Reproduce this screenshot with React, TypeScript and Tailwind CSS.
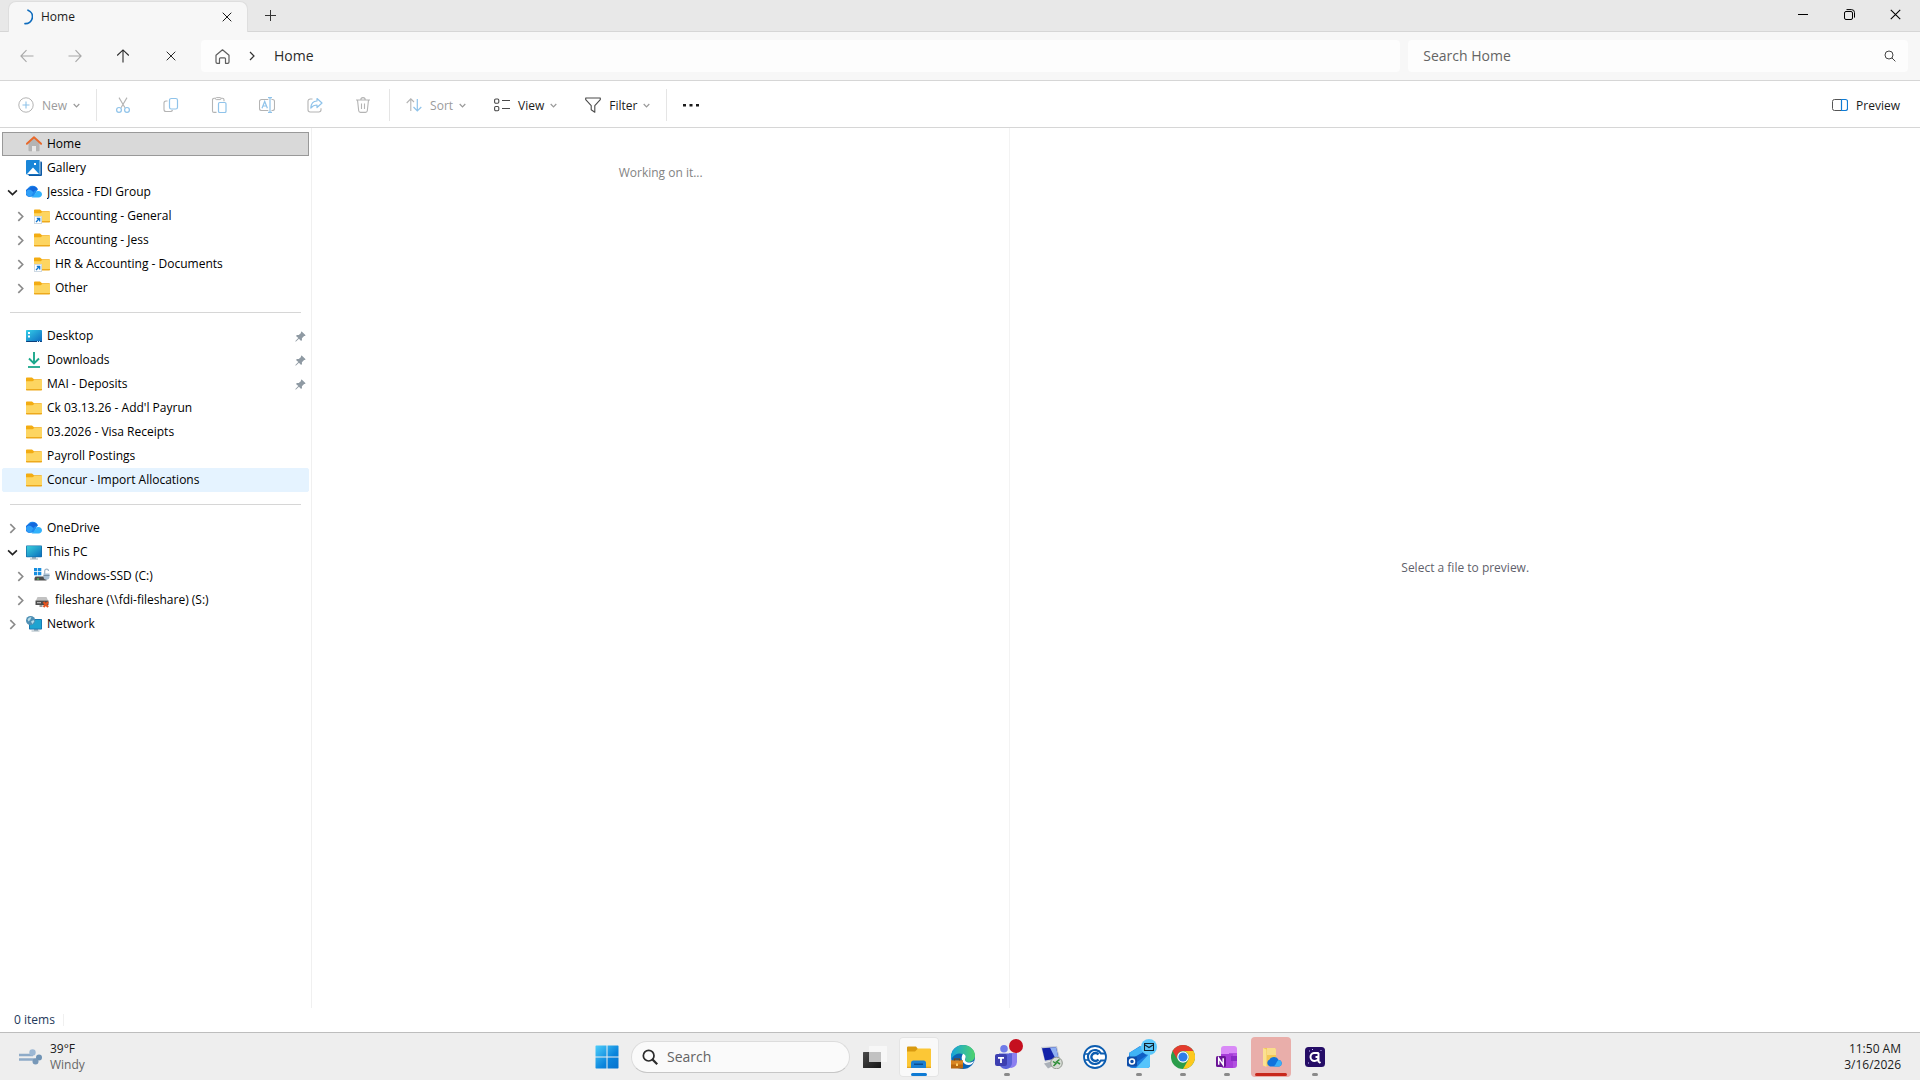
import type { ReactNode } from 'react';

function Svg({ size = 16, box = 16, children, className = '' }: { size?: number; box?: number; children: ReactNode; className?: string }) {
  return (
    <svg width={size} height={size} viewBox={`0 0 ${box} ${box}`} fill="none" stroke="none" className={`shrink-0 ${className}`} aria-hidden="true">
      {children}
    </svg>
  );
}

/* ---------- line icons ---------- */

const Cross = ({ size = 10 }: { size?: number }) => (
  <Svg size={size} box={10}>
    <path d="M.7.7l8.6 8.6M9.3.7L.7 9.3" stroke="currentColor" />
  </Svg>
);

const Arrow = ({ turn }: { turn: string }) => (
  <Svg size={14} box={14} className={turn}>
    <path d="M13.5 7H1M6.5 1.2L.9 7l5.6 5.8" stroke="currentColor" strokeWidth="1.1" />
  </Svg>
);

const ChevronDown = () => (
  <Svg size={7} box={7} className="text-[#9a9a9a]">
    <path d="M.7 2L3.5 4.9 6.3 2" stroke="currentColor" strokeWidth="1.2" />
  </Svg>
);

const NewIcon = () => (
  <Svg>
    <circle cx="8" cy="8" r="7.2" stroke="#b4b4b4" />
    <path d="M8 4.5v7M4.5 8h7" stroke="#8fc3ea" strokeWidth="1.1" />
  </Svg>
);

const CutIcon = () => (
  <Svg>
    <path d="M4 .6l6 10.2M12 .6L6 10.8" stroke="#b4b4b4" strokeWidth="1.1" />
    <circle cx="4" cy="12.9" r="2.4" stroke="#8fc3ea" strokeWidth="1.2" />
    <circle cx="12" cy="12.9" r="2.4" stroke="#8fc3ea" strokeWidth="1.2" />
  </Svg>
);

const CopyIcon = () => (
  <Svg>
    <path d="M4.5 4H3a2 2 0 0 0-2 2v6.5a2 2 0 0 0 2 2h4.500a2 2 0 0 0 2-1.500" stroke="#b4b4b4" strokeWidth="1.1" />
    <rect x="6.5" y="1.500" width="8" height="10.500" rx="1.800" stroke="#8fc3ea" strokeWidth="1.200" />
  </Svg>
);

const PasteIcon = () => (
  <Svg>
    <path d="M5.500 15.400H3a1.500 1.500 0 0 1-1.500-1.500V2.800A1.500 1.500 0 0 1 3 1.300h1.500M10 1.300h1.500A1.500 1.500 0 0 1 13 2.800v1.500" stroke="#b4b4b4" strokeWidth="1.100" />
    <rect x="4.500" y=".6" width="5.500" height="2" rx="1" stroke="#b4b4b4" />
    <rect x="7.500" y="5.500" width="7.500" height="10" rx="1.300" stroke="#8fc3ea" strokeWidth="1.200" />
  </Svg>
);

const RenameIcon = () => (
  <Svg>
    <path d="M9.300 2.500H2.500a2 2 0 0 0-2 2v7a2 2 0 0 0 2 2h6.800M12.500 2.500h1a2 2 0 0 1 2 2v7a2 2 0 0 1-2 2h-1" stroke="#b4b4b4" strokeWidth="1.100" />
    <path d="M11 .6v14.800M9 .6h4M9 15.400h4M3 11.300l2.700-6.800 2.700 6.800M3.900 9h3.600" stroke="#8fc3ea" strokeWidth="1.200" />
  </Svg>
);

const ShareIcon = () => (
  <Svg>
    <path d="M5.500 2H3.200A2.200 2.200 0 0 0 1 4.200v8.600A2.200 2.200 0 0 0 3.200 15h8.600a2.200 2.200 0 0 0 2.200-2.200v-1.500" stroke="#b4b4b4" strokeWidth="1.100" />
    <path d="M10 1.500l5 4.500-5 4.500V8C7.300 8 5.500 8.900 3.800 11 4 7 6 4.200 10 4V1.500z" stroke="#8fc3ea" strokeWidth="1.200" strokeLinejoin="round" />
  </Svg>
);

const TrashIcon = () => (
  <Svg>
    <path d="M1 3h14M5.800 2.800a2.200 2.200 0 0 1 4.400 0M2.500 3l1.200 10.800a1.800 1.800 0 0 0 1.800 1.600h5a1.800 1.800 0 0 0 1.800-1.600L13.500 3M6.500 6.500v5.500M9.500 6.500v5.500" stroke="#b4b4b4" strokeWidth="1.100" />
  </Svg>
);

const SortIcon = () => (
  <Svg>
    <path d="M4.800 14V2M.7 6l4.100-4.200L8 5" stroke="#b4b4b4" strokeWidth="1.100" />
    <path d="M11.300 2v12M7.500 10l3.800 4 4-4" stroke="#8fc3ea" strokeWidth="1.200" />
  </Svg>
);

const ViewIcon = () => (
  <Svg>
    <g stroke="#4a4a4a" strokeWidth="1.100">
      <rect x=".6" y="2" width="4.200" height="4.200" rx="1.200" />
      <rect x=".6" y="9.500" width="4.200" height="4.200" rx="1.200" />
      <path d="M8 3.500h8M8 11.500h8" />
    </g>
  </Svg>
);

const FilterIcon = () => (
  <Svg>
    <path d="M.7 1h14.600v1.700L9.800 8.700v6.500l-3.600-2.400V8.700L.7 2.700z" stroke="#4a4a4a" strokeWidth="1.100" strokeLinejoin="round" />
  </Svg>
);

const SearchIcon = ({ size = 12, bold = false }: { size?: number; bold?: boolean }) => (
  <Svg size={size} box={12}>
    <circle cx="5" cy="5" r="4" stroke="currentColor" strokeWidth={bold ? 1.3 : 1} />
    <path d="M7.900 7.900l3.500 3.500" stroke="currentColor" strokeWidth={bold ? 1.700 : 1} />
  </Svg>
);

/* ---------- tree icons ---------- */

const HomeIcon = () => (
  <Svg>
    <path d="M2.500 7L8 2l5.500 5v7.500a.8.800 0 0 1-.8.800H10V10H6v5.300H3.300a.8.800 0 0 1-.8-.8z" fill="#b4b4b4" />
    <path d="M6 10h4v5.300H6z" fill="#e8e8e8" />
    <path d="M.9 7.800L8 1.300l7.100 6.500" stroke="#e8682a" strokeWidth="1.900" strokeLinejoin="round" strokeLinecap="round" />
  </Svg>
);

const GalleryIcon = () => (
  <Svg>
    <path d="M13 1.500h2a1 1 0 0 1 1 1V15a1 1 0 0 1-1 1H3l-1-2z" fill="#0c59a4" />
    <rect width="14" height="14.500" rx="1" fill="#1a86d8" />
    <path d="M14 .5v14" stroke="#fff" strokeWidth=".7" />
    <path d="M1 14l6-6.500 6 6.500z" fill="#fff" />
    <rect x="8" y="3" width="2" height="2" fill="#fff" />
  </Svg>
);

const CloudIcon = () => (
  <Svg>
    <path d="M4 12.800A4 4 0 0 1 1.200 5.900 5.600 5.600 0 0 1 11.800 5.300l-4 7.500z" fill="#1f8df0" />
    <path d="M3.500 4.200A5 5 0 0 1 11.900 5.400c-3 .2-4.500 2-5.700 4C5.300 11 4.500 12 3.500 12.700A4 4 0 0 1 3.500 4.200z" fill="#1268dd" />
    <path d="M1 6.200C3 4.600 6.500 6.500 7.200 8.400L4.800 12.800H4A4 4 0 0 1 1 6.200z" fill="#2f9ff7" />
    <path d="M5.500 13.500c2.500-1 3.200-4.500 6-6.500 2.700-.4 4.500 1.300 4.500 3.300s-1.500 3.200-3.500 3.200z" fill="#32b2fb" />
  </Svg>
);

const FolderIcon = ({ linked = false }: { linked?: boolean }) => (
  <Svg>
    <path d="M0 2.300a.8.800 0 0 1 .8-.8H6l2 1.700h7.200a.8.800 0 0 1 .8.800V8H0z" fill="#f3ac12" />
    <path d="M0 5.200h6.500L8.300 4H16v9.200a.8.800 0 0 1-.8.800H.8a.8.800 0 0 1-.8-.8z" fill="#fdd561" />
    <path d="M0 13v.4c0 .6.4 1 1 1h14c.6 0 1-.4 1-1V13z" fill="#eda91c" />
    {linked && (
      <>
        <rect x=".5" y="8.500" width="7" height="7" fill="#fff" stroke="#cdd8e2" />
        <path d="M2 14l3.500-3.500M2.800 10.500h2.900v2.900" stroke="#0f75cf" strokeWidth="1.300" />
      </>
    )}
  </Svg>
);

const DesktopIcon = () => (
  <Svg>
    <defs>
      <linearGradient id="desk" x1="0" y1="0" x2="1" y2="1">
        <stop stopColor="#35cfe8" />
        <stop offset="1" stopColor="#0c68c0" />
      </linearGradient>
    </defs>
    <rect y="2" width="16" height="12" rx=".8" fill="url(#desk)" />
    <path d="M0 13h16v.3a.8.800 0 0 1-.8.800H.8a.8.800 0 0 1-.8-.8z" fill="#0b3f7c" />
    <path d="M2 4h2v2H2zM2 7.500h2v2H2z" fill="#fff" />
    <path d="M11 13h1v1h-1zM13 13h1v1h-1z" fill="#bfe6ff" />
  </Svg>
);

const DownloadIcon = () => (
  <Svg>
    <path d="M8 0v11M3 6.500L8 11.400l5-4.900" stroke="#1ba88c" strokeWidth="1.900" />
    <path d="M2 15h12" stroke="#1ba88c" strokeWidth="1.800" />
  </Svg>
);

const PcIcon = () => (
  <Svg>
    <defs>
      <linearGradient id="pc" x1="0" y1="0" x2="1" y2="1">
        <stop stopColor="#3bd0dc" />
        <stop offset="1" stopColor="#0a6fbd" />
      </linearGradient>
    </defs>
    <path d="M6 13h4v2H6z" fill="#9db1be" />
    <rect y="1.500" width="16" height="11.800" rx=".8" fill="#146aa8" />
    <rect x=".7" y="2.100" width="14.600" height="10.500" fill="url(#pc)" />
    <path d="M4 14.500h8v1H4z" fill="#a3b3bd" />
  </Svg>
);

const DriveIcon = () => (
  <Svg>
    <path d="M0 0h3.300v3.300H0zM4 0h3.300v3.300H4zM0 4h3.300v3.300H0zM4 4h3.300v3.300H4z" fill="#168ee0" />
    <path d="M1.500 8.500h10l1 1.500v2.500H.5V10z" fill="#4d4d4d" />
    <path d="M3 10.500h2v1H3z" fill="#58e05c" />
    <path d="M10.700 6V3a1.900 1.900 0 0 1 3.800 0" stroke="#9fb4c6" strokeWidth="1.200" />
    <path d="M9.500 5.500h6v3.300a3 3 0 0 1-6 0z" fill="#a9c0d4" />
    <path d="M9.500 7.500h6" stroke="#7891a6" />
  </Svg>
);

const ShareDriveIcon = () => (
  <Svg>
    <path d="M3.500 5h9l1.500 3.500H2z" fill="#c2c2c2" />
    <path d="M1.500 8.500h13V13h-13z" fill="#4c4c4c" />
    <path d="M3 10h4v1.300H3z" fill="#b5b5b5" />
    <path d="M5.500 13h3v2h-3z" fill="#9b9b9b" />
    <path d="M9.500 10l4.600 5M14.100 10l-4.600 5" stroke="#e2531f" strokeWidth="2.100" />
  </Svg>
);

const NetworkIcon = () => (
  <Svg>
    <path d="M8 13h4v2H8z" fill="#9db1be" />
    <rect x="3" y="3" width="13" height="10.500" rx=".8" fill="#146aa8" />
    <rect x="3.700" y="3.700" width="11.600" height="9" fill="#1fa3d0" />
    <path d="M5.500 14.500h8v1h-8z" fill="#a3b3bd" />
    <circle cx="4.600" cy="4.600" r="4.600" fill="#4e8fb4" />
    <path d="M1.500 3.500c1-2 3-2.500 4-2.200L4.300 3.800 2.500 5.500zM5 5.500l2.500-1.500.8 1.500-2 2.500z" fill="#b6dbe8" />
  </Svg>
);

const PinIcon = () => (
  <Svg size={11} box={11}>
    <path d="M6.700.4l3.900 3.900-.7.800-.8-.1-2.200 2.200.1 1.900-.9.900-2.200-2.300L1 10.600H.4V10l2.900-2.900L1 4.900 1.900 4l1.900.1L6 1.900l-.1-.8z" fill="#8f9aa3" />
  </Svg>
);

/* ---------- navigation tree ---------- */

type Row = { label: string; icon: ReactNode; depth?: number; arrow?: 'open' | 'closed'; pinned?: boolean; state?: 'selected' | 'hover' };

const groups: Row[][] = [
  [
    { label: 'Home', icon: <HomeIcon />, state: 'selected' },
    { label: 'Gallery', icon: <GalleryIcon /> },
    { label: 'Jessica - FDI Group', icon: <CloudIcon />, arrow: 'open' },
    { label: 'Accounting - General', icon: <FolderIcon linked />, depth: 1, arrow: 'closed' },
    { label: 'Accounting - Jess', icon: <FolderIcon />, depth: 1, arrow: 'closed' },
    { label: 'HR & Accounting - Documents', icon: <FolderIcon linked />, depth: 1, arrow: 'closed' },
    { label: 'Other', icon: <FolderIcon />, depth: 1, arrow: 'closed' },
  ],
  [
    { label: 'Desktop', icon: <DesktopIcon />, pinned: true },
    { label: 'Downloads', icon: <DownloadIcon />, pinned: true },
    { label: 'MAI - Deposits', icon: <FolderIcon />, pinned: true },
    { label: "Ck 03.13.26 - Add'l Payrun", icon: <FolderIcon /> },
    { label: '03.2026 - Visa Receipts', icon: <FolderIcon /> },
    { label: 'Payroll Postings', icon: <FolderIcon /> },
    { label: 'Concur - Import Allocations', icon: <FolderIcon />, state: 'hover' },
  ],
  [
    { label: 'OneDrive', icon: <CloudIcon />, arrow: 'closed' },
    { label: 'This PC', icon: <PcIcon />, arrow: 'open' },
    { label: 'Windows-SSD (C:)', icon: <DriveIcon />, depth: 1, arrow: 'closed' },
    { label: 'fileshare (\\\\fdi-fileshare) (S:)', icon: <ShareDriveIcon />, depth: 1, arrow: 'closed' },
    { label: 'Network', icon: <NetworkIcon />, arrow: 'closed' },
  ],
];

const rowState = {
  selected: 'border-[#999999] bg-[#d9d9d9]',
  hover: 'rounded-xs border-[#e5f3ff] bg-[#e5f3ff]',
  none: 'border-transparent',
};

function TreeRow({ row }: { row: Row }) {
  return (
    <li>
      <button type="button" className={`flex h-6 w-full items-center border text-left text-xs text-black ${row.depth ? 'pl-3' : 'pl-1'} ${rowState[row.state ?? 'none']}`}>
        <span className="flex w-[19px] shrink-0">
          {row.arrow === 'open' && (
            <Svg size={11} box={10}>
              <path d="M1 3l4 4 4-4" stroke="#222" strokeWidth="1.500" />
            </Svg>
          )}
          {row.arrow === 'closed' && (
            <Svg size={11} box={10}>
              <path d="M3 1l4 4-4 4" stroke="#8a8a8a" strokeWidth="1.500" />
            </Svg>
          )}
        </span>
        {row.icon}
        <span className="ml-[5px] flex-1 truncate">{row.label}</span>
        {row.pinned && <span className="mr-0.5"><PinIcon /></span>}
      </button>
    </li>
  );
}

/* ---------- taskbar ---------- */

const WindowsLogo = () => (
  <Svg size={24} box={24}>
    <defs>
      <linearGradient id="win" gradientUnits="userSpaceOnUse" x1="0" y1="0" x2="24" y2="24">
        <stop stopColor="#4fd0fb" />
        <stop offset=".6" stopColor="#0a84dc" />
        <stop offset="1" stopColor="#0670cc" />
      </linearGradient>
    </defs>
    <path d="M1 .5h10.500v11H.5V1zM12.500.5H23l.5.5v10.500h-11zM.5 12.500h11v11H1l-.5-.5zM12.500 12.500h11V23l-.5.500H12.500z" fill="url(#win)" />
  </Svg>
);

const TaskViewIcon = () => (
  <Svg size={24} box={24}>
    <defs>
      <linearGradient id="tv" x1="0" y1="0" x2="1" y2="1">
        <stop stopColor="#4a4a4a" />
        <stop offset="1" stopColor="#161616" />
      </linearGradient>
    </defs>
    <rect y="7" width="18" height="16" rx=".5" fill="url(#tv)" />
    <rect x="6" y="1" width="18" height="16" rx=".5" fill="#f7f7f7" />
    <rect x="6" y="7" width="12" height="10" fill="#c2c2c2" />
  </Svg>
);

const ExplorerIcon = () => (
  <Svg size={24} box={24}>
    <path d="M0 2.500a1 1 0 0 1 1-1h8l2 2.500h12a1 1 0 0 1 1 1V9H0z" fill="#d99a10" />
    <path d="M0 6.500h8l3-3h12a1 1 0 0 1 1 1V23H0z" fill="#fcc736" />
    <path d="M0 21.700h24v1.300H0z" fill="#e5a51e" />
    <path d="M4 23v-5a2.500 2.500 0 0 1 2.500-2.500h10A2.500 2.500 0 0 1 19 18v5z" fill="#1c80d2" />
    <path d="M7 18.500h9v1.500H7z" fill="#0b4d91" />
  </Svg>
);

const EdgeIcon = () => (
  <Svg size={24} box={24}>
    <defs>
      <linearGradient id="edge" x1="0" y1="0" x2="1" y2="0">
        <stop stopColor="#16a3dd" />
        <stop offset="1" stopColor="#4fd36b" />
      </linearGradient>
    </defs>
    <circle cx="12" cy="12" r="12" fill="#0b64b5" />
    <path d="M0 11C1 4 6 0 12 0c7 0 12 5 12 10.500 0 4-3 6.500-6.500 6.500-3 0-4-1.200-3.300-2.500C16 11 12 8 8 8.500 4 9 1 12 .2 15z" fill="url(#edge)" />
    <path d="M12 8.800c2 .5 3.500 2.500 2.200 5-1 2 .8 3.700 4.300 3.700 1.800 0 3.500-.6 4.500-1.500-1 2.500-3 4-5.500 4-5 0-9-6-5.500-11.200z" fill="#fff" />
    <path d="M0 15.500h12v8H0z" fill="#b9670e" />
    <path d="M0 15.500h12v4H0z" fill="#d98521" />
    <path d="M3.500 15.500V14h5v1.500" stroke="#7d430a" strokeWidth="1.200" />
    <rect x="5" y="18.500" width="2" height="2.500" fill="#ffd26a" />
  </Svg>
);

const TeamsIcon = () => (
  <Svg size={24} box={24}>
    <circle cx="9" cy="3.800" r="3.800" fill="#6f7be8" />
    <path d="M14 8h8v9a6 6 0 0 1-8 5.500z" fill="#8b7ff0" />
    <path d="M4 8.500h13V18a6 6 0 0 1-6.500 6A6.500 6.500 0 0 1 4 17.500z" fill="#5a62d8" />
    <rect x="0" y="9" width="12" height="12" rx="2" fill="#3d3fb0" />
    <path d="M3 12h6v1.700H6.900V18H5.100v-4.300H3z" fill="#fff" />
  </Svg>
);

const RemoteIcon = () => (
  <Svg size={24} box={24}>
    <path d="M2 2l16-1 3 13L6 17z" fill="#c6cbd3" />
    <path d="M3 3.200l14-1 2.500 11L6 15.500z" fill="#1222a8" />
    <path d="M11 2.700l6-.5 2.500 11-3 .5z" fill="#8fb0f2" />
    <path d="M5 18.500l7-2 3 4-6 3z" fill="#aab0b8" />
    <circle cx="17.500" cy="18" r="5.800" fill="#d7dbd5" stroke="#92988f" />
    <path d="M14 16.500l3 2-2.500 2.500M20.500 14.500l-3 2.500 3.500 2" stroke="#2f8f38" strokeWidth="1.500" />
  </Svg>
);

const CIcon = () => (
  <Svg size={24} box={24}>
    <circle cx="12" cy="12" r="11" fill="#fff" stroke="#0c5db0" strokeWidth="1.800" />
    <path d="M1.500 9H6M1.500 15H6" stroke="#0c5db0" strokeWidth="1.600" />
    <path d="M22.500 8.500H18a7 7 0 1 0 0 7h4.500" stroke="#0c5db0" strokeWidth="2.200" />
    <path d="M15.500 9.500a4 4 0 1 0 0 5" stroke="#0c5db0" strokeWidth="2.400" />
  </Svg>
);

const OutlookIcon = () => (
  <Svg size={24} box={24}>
    <path d="M2 8L13 1l10 7v12a3 3 0 0 1-3 3H5a3 3 0 0 1-3-3z" fill="#1c7fe0" />
    <path d="M2 8L14 1l6 4L4 15z" fill="#3fb3f5" />
    <path d="M23 8v12a3 3 0 0 1-3 3H9z" fill="#56c4fb" />
    <path d="M4 14L20 5l3 3-13 9z" fill="#0f5fc4" />
    <rect x="0" y="11.500" width="10" height="10" rx="1.500" fill="#0e4da8" />
    <circle cx="5" cy="16.500" r="2.500" stroke="#fff" strokeWidth="1.500" />
  </Svg>
);

const ChromeIcon = () => (
  <Svg size={24} box={24}>
    <circle cx="12" cy="12" r="12" fill="#2a9d4a" />
    <path d="M1.600 6A12 12 0 0 1 22.400 6H12a6 6 0 0 0-5.200 9z" fill="#e33b2e" />
    <path d="M22.400 6A12 12 0 0 1 12 24l5.200-9A6 6 0 0 0 12 6z" fill="#fdc81e" />
    <circle cx="12" cy="12" r="5.800" fill="#fff" />
    <circle cx="12" cy="12" r="4.600" fill="#2f7de8" />
  </Svg>
);

const OneNoteIcon = () => (
  <Svg size={24} box={24}>
    <path d="M6 4a3 3 0 0 1 3-3h10a3 3 0 0 1 3 3v6H6z" fill="#d98af7" />
    <path d="M14 8h8v12a3 3 0 0 1-3 3h-5z" fill="#b14fe0" />
    <path d="M6 9h12v14H9a3 3 0 0 1-3-3z" fill="#a63bd8" />
    <path d="M16 11h6v5h-6z" fill="#8a2bc4" />
    <rect x="1" y="11" width="10" height="11" rx="1.500" fill="#6a1496" />
    <path d="M3.700 19.800v-6.600L8.200 19.800v-6.600" stroke="#fff" strokeWidth="1.500" />
  </Svg>
);

const OneDriveFolderIcon = () => (
  <Svg size={24} box={24}>
    <path d="M4 3h12l1 1.500V21H4z" fill="#f3c756" />
    <path d="M4 3l3.500 1.500V22L4 20.500z" fill="#fbe191" />
    <path d="M8 3h8l1 1.500V10H8z" fill="#f9dc8c" />
    <path d="M11 21.500a3.700 3.700 0 0 1-.4-7 5 5 0 0 1 9 .5 3.300 3.300 0 0 1 .6 6.500z" fill="#1173dc" />
    <path d="M14 21.500c3-.5 3-4.500 5.500-6.500a3.300 3.300 0 0 1 .6 6.500z" fill="#39b0f7" />
  </Svg>
);

const QIcon = () => (
  <Svg size={24} box={24}>
    <rect x="2" y="2" width="20" height="20" rx="3.500" fill="#250d66" />
    <path d="M15.800 8H11a4 4 0 1 0 4.500 4H12.500M15.500 8v8.500l2 1.500" stroke="#fff" strokeWidth="2" />
    <path d="M6 5.500h1v1H6zM9 4h1v1H9zM17.500 5h1v1h-1zM5 17.500h1v1H5z" fill="#c9b9ff" />
  </Svg>
);

type TaskApp = { name: string; icon: ReactNode; mark?: 'running' | 'active' | 'alert'; badge?: ReactNode };

const apps: TaskApp[] = [
  { name: 'Task View', icon: <TaskViewIcon /> },
  { name: 'File Explorer', icon: <ExplorerIcon />, mark: 'active' },
  { name: 'Microsoft Edge', icon: <EdgeIcon /> },
  { name: 'Microsoft Teams', icon: <TeamsIcon />, mark: 'running', badge: <span className="absolute top-1.5 right-1.5 size-3.5 rounded-full bg-[#c50f1f]" /> },
  { name: 'Remote Desktop', icon: <RemoteIcon /> },
  { name: 'Connect', icon: <CIcon /> },
  {
    name: 'Outlook',
    icon: <OutlookIcon />,
    mark: 'running',
    badge: (
      <span className="absolute top-1.5 right-1 flex size-4 items-center justify-center rounded-full bg-[#5cc8fa]">
        <Svg size={10} box={10}>
          <path d="M.5 1.500h9v7h-9zM1 3l4 2.500L9 3" stroke="#10222e" strokeWidth="1.100" />
        </Svg>
      </span>
    ),
  },
  { name: 'Google Chrome', icon: <ChromeIcon />, mark: 'running' },
  { name: 'OneNote', icon: <OneNoteIcon />, mark: 'running' },
  { name: 'OneDrive', icon: <OneDriveFolderIcon />, mark: 'alert' },
  { name: 'Quick Assist', icon: <QIcon />, mark: 'running' },
];

const frame = {
  none: '',
  running: '',
  active: 'bg-[#f9f9f9] ring-1 ring-[#e4e4e4] ring-inset',
  alert: 'bg-[#e9aeaa]',
};
const bar = {
  none: 'hidden',
  running: 'w-1.5 bg-[#8a8a8a]',
  active: 'w-4 bg-[#0f7bd4]',
  alert: 'w-8 bg-[#c8281c]',
};

function TaskButton({ app }: { app: TaskApp }) {
  const mark = app.mark ?? 'none';
  return (
    <button type="button" aria-label={app.name} className="relative flex h-full w-11 items-center justify-center">
      <span className={`flex size-10 items-center justify-center rounded ${frame[mark]}`}>{app.icon}</span>
      {app.badge}
      <span className={`absolute bottom-1 h-[3px] rounded-full ${bar[mark]}`} />
    </button>
  );
}

/* ---------- page ---------- */

const Divider = () => <span className="h-8 w-px bg-[#e5e5e5]" />;

function Menu({ icon, label, disabled = false }: { icon: ReactNode; label: string; disabled?: boolean }) {
  return (
    <button type="button" disabled={disabled} className={`flex h-8 items-center px-3.5 ${disabled ? 'text-[#9b9b9b]' : 'text-[#1b1b1b]'}`}>
      {icon}
      <span className="mr-1.5 ml-2 pt-0.5">{label}</span>
      <ChevronDown />
    </button>
  );
}

const edits = [
  { name: 'Cut', icon: <CutIcon /> },
  { name: 'Copy', icon: <CopyIcon /> },
  { name: 'Paste', icon: <PasteIcon /> },
  { name: 'Rename', icon: <RenameIcon /> },
  { name: 'Share', icon: <ShareIcon /> },
  { name: 'Delete', icon: <TrashIcon /> },
];

export default function App() {
  return (
    <div className="flex h-screen flex-col overflow-hidden bg-white font-['Open_Sans','Noto_Sans',sans-serif] text-xs text-[#1b1b1b]">
      <header className="flex h-8 shrink-0 items-stretch border-b border-[#d6d6d6] bg-[#e8e8e8]">
        <div className="mt-px -mb-px ml-2 flex w-60 items-center rounded-t-lg border border-b-0 border-[#dedede] bg-[#f7f7f7] pr-[11px] pl-2 text-[#1b1b1b]">
          <Svg>
            <path d="M11 1.200A7 7 0 0 1 8 14.700" stroke="#0f6cbd" strokeWidth="1.700" strokeLinecap="round" />
          </Svg>
          <span className="ml-2 flex-1 font-medium">Home</span>
          <button type="button" aria-label="Close tab" className="p-1"><Cross /></button>
        </div>
        <button type="button" aria-label="New tab" className="flex w-11 items-center justify-center">
          <Svg size={11} box={11}><path d="M5.500 0v11M0 5.500h11" stroke="#333" /></Svg>
        </button>
        <div className="ml-auto flex pr-0.5 pb-[3px] text-black">
          <button type="button" aria-label="Minimize" className="flex w-[46px] items-center justify-center">
            <Svg size={10} box={10}><path d="M0 5.500h10" stroke="currentColor" /></Svg>
          </button>
          <button type="button" aria-label="Restore" className="flex w-[46px] items-center justify-center">
            <Svg size={11} box={11}>
              <rect x=".5" y="2.500" width="8" height="8" rx="1.500" stroke="currentColor" />
              <path d="M2.500.6h5a3 3 0 0 1 3 3v5" stroke="currentColor" />
            </Svg>
          </button>
          <button type="button" aria-label="Close" className="flex w-[46px] items-center justify-center"><Cross size={11} /></button>
        </div>
      </header>

      <div className="flex h-[49px] shrink-0 items-center border-b border-[#d6d6d6] bg-[#f7f7f7] pr-3 pl-[3px] text-sm">
        <button type="button" aria-label="Back" disabled className="flex w-12 justify-center text-[#a8a8a8]"><Arrow turn="" /></button>
        <button type="button" aria-label="Forward" disabled className="flex w-12 justify-center text-[#a8a8a8]"><Arrow turn="rotate-180" /></button>
        <button type="button" aria-label="Up" className="flex w-12 justify-center text-[#2b2b2b]"><Arrow turn="rotate-90" /></button>
        <button type="button" aria-label="Stop loading" className="flex w-12 justify-center text-[#2b2b2b]"><Cross /></button>
        <div className="ml-1.5 grid flex-1 grid-cols-[12fr_5fr] gap-2">
          <nav aria-label="Address" className="flex h-8 items-center rounded bg-[#fdfdfd] pl-3.5">
            <button type="button" aria-label="Home location">
              <Svg size={15} box={15}>
                <path d="M1 6.300L7.500.800 14 6.300v6.700a1.300 1.300 0 0 1-1.300 1.300h-2.200V9.800A1 1 0 0 0 9.500 8.800h-4a1 1 0 0 0-1 1v4.500H2.300A1.300 1.300 0 0 1 1 13z" stroke="#5e5e5e" strokeWidth="1.200" strokeLinejoin="round" />
              </Svg>
            </button>
            <Svg size={10} box={10} className="ml-[17px]">
              <path d="M3 1l4 4-4 4" stroke="#333" strokeWidth="1.200" />
            </Svg>
            <button type="button" className="ml-[17px] text-[#2b2b2b]">Home</button>
          </nav>
          <label className="flex h-8 items-center rounded bg-[#fdfdfd] pr-3 pl-[15px] text-[#444]">
            <input type="text" aria-label="Search Home" placeholder="Search Home" className="min-w-0 flex-1 bg-transparent outline-none placeholder:text-[#646464]" />
            <SearchIcon />
          </label>
        </div>
      </div>

      <div className="flex h-[47px] shrink-0 items-center border-b border-[#d6d6d6] bg-white pt-0.5 pr-5 pl-1">
        <Menu icon={<NewIcon />} label="New" disabled />
        <div className="ml-0.5 flex items-center">
          <Divider />
          <div className="mx-0.5 flex">
            {edits.map((e) => (
              <button key={e.name} type="button" disabled aria-label={e.name} className="flex h-8 w-12 items-center justify-center">
                {e.icon}
              </button>
            ))}
          </div>
          <Divider />
        </div>
        <div className="mx-0.5 flex">
          <Menu icon={<SortIcon />} label="Sort" disabled />
          <Menu icon={<ViewIcon />} label="View" />
          <Menu icon={<FilterIcon />} label="Filter" />
        </div>
        <Divider />
        <button type="button" aria-label="See more" className="ml-4">
          <Svg>
            <path d="M0 7h3v2.500H0zM6.500 7h3v2.500h-3zM13 7h3v2.500h-3z" fill="#1b1b1b" />
          </Svg>
        </button>
        <button type="button" className="ml-auto flex items-center gap-2">
          <Svg>
            <path d="M9.500 2.500h-7a2 2 0 0 0-2 2v7a2 2 0 0 0 2 2h7" stroke="#555" />
            <path d="M9.500 2.500h4a2 2 0 0 1 2 2v7a2 2 0 0 1-2 2h-4z" stroke="#0f7bd4" strokeWidth="1.200" />
          </Svg>
          <span className="pt-0.5">Preview</span>
        </button>
      </div>

      <main className="flex min-h-0 flex-1">
        <nav aria-label="Folders" className="w-[312px] shrink-0 border-r border-[#f0f0f0] py-1 pr-0.5 pl-0.5">
          {groups.map((rows, i) => (
            <div key={i}>
              {i > 0 && (
                <div className="flex h-6 items-center pr-2 pl-2">
                  <hr className="flex-1 border-[#d6d6d6]" />
                </div>
              )}
              <ul>
                {rows.map((row) => (
                  <TreeRow key={row.label} row={row} />
                ))}
              </ul>
            </div>
          ))}
        </nav>
        <section className="flex-[23] border-r border-[#f3f3f3] pt-[37px] text-center text-[#838383]">Working on it...</section>
        <aside className="flex flex-[30] items-center justify-center text-[#5f5f6b]">Select a file to preview.</aside>
      </main>

      <footer className="flex h-6 shrink-0 items-center bg-white pl-3.5 text-[#1e395b]">
        <span className="border-r border-[#f0f0f0] pr-2 leading-3">0 items</span>
      </footer>

      <div className="grid h-12 shrink-0 grid-cols-[1fr_auto_1fr] items-stretch border-t border-[#bdbdbd] bg-[#eeeeee]">
        <button type="button" className="flex items-center gap-2 pl-[18px] text-left leading-4">
          <Svg size={24} box={24}>
            <path d="M1 10h14M1 14.500h19" stroke="#8eabc8" strokeWidth="2.400" />
            <circle cx="14.500" cy="7.500" r="3.200" fill="#9db8d4" />
            <circle cx="21" cy="12.500" r="3" fill="#6f93b5" />
            <circle cx="17.500" cy="16.500" r="3" fill="#7798b8" />
          </Svg>
          <span>
            <span className="block text-[#1b1b1b]">39°F</span>
            <span className="block text-[#666]">Windy</span>
          </span>
        </button>
        <div className="flex items-center pl-0.5">
          <button type="button" aria-label="Start" className="flex w-11 justify-center"><WindowsLogo /></button>
          <label className="mr-[3px] ml-0.5 flex h-8 w-[219px] items-center rounded-full border border-[#dcdcdc] border-b-[#c6c6c6] bg-[#fafafa] pl-2.5 text-[#2b2b2b]">
            <SearchIcon size={16} bold />
            <input type="text" aria-label="Search" placeholder="Search" className="ml-[9px] min-w-0 flex-1 bg-transparent text-sm outline-none placeholder:text-[#646464]" />
          </label>
          {apps.map((app) => (
            <TaskButton key={app.name} app={app} />
          ))}
        </div>
        <button type="button" className="justify-self-end pr-[19px] text-right leading-4">
          <span className="block">11:50 AM</span>
          <span className="block">3/16/2026</span>
        </button>
      </div>
    </div>
  );
}
